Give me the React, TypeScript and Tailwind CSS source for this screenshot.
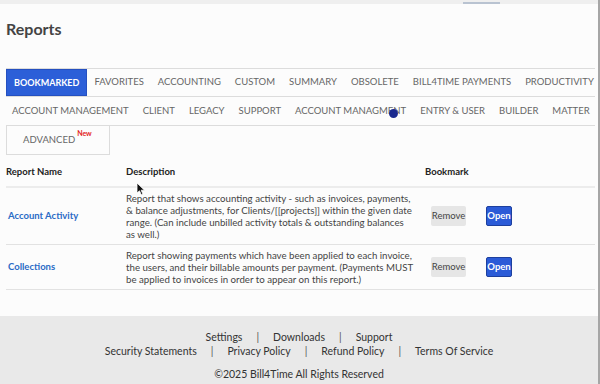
import React from 'react';

const rowOne = ['FAVORITES', 'ACCOUNTING', 'CUSTOM', 'SUMMARY', 'OBSOLETE', 'BILL4TIME PAYMENTS', 'PRODUCTIVITY'];
const rowTwo = ['ACCOUNT MANAGEMENT', 'CLIENT', 'LEGACY', 'SUPPORT', 'ACCOUNT MANAGMENT', 'ENTRY & USER', 'BUILDER', 'MATTER'];

const reports = [
  {
    name: 'Account Activity',
    lines: [
      'Report that shows accounting activity - such as invoices, payments,',
      '& balance adjustments, for Clients/[[projects]] within the given date',
      'range. (Can include unbilled activity totals & outstanding balances',
      'as well.)',
    ],
  },
  {
    name: 'Collections',
    lines: [
      'Report showing payments which have been applied to each invoice,',
      'the users, and their billable amounts per payment. (Payments MUST',
      'be applied to invoices in order to appear on this report.)',
    ],
  },
];

const Sep = () => <span className="mx-[14px] text-[#555]">|</span>;

const App: React.FC = () => {
  return (
    <div className="relative w-[600px] h-[384px] overflow-hidden bg-[#fcfcfc] border-r-2 border-[#a6a6a6] flex flex-col font-['Lato',sans-serif]">
      {/* top strip */}
      <div className="h-[4px] bg-[#efefef] flex">
        <div className="ml-[463px] mt-[2px] w-[37px] h-[2px] bg-[#b9c3d1]" />
      </div>

      <div className="flex-1 pl-[6px] pr-[3px]">
        {/* Title */}
        <h1 className="mt-[15px] text-[16px] leading-[20px] font-bold text-[#444]">Reports</h1>

        {/* Tabs */}
        <div className="mt-[29px]">
          <div className="flex h-[29px] border-t border-b border-[#dcdcdc] items-center whitespace-nowrap">
            <div className="h-full shrink-0 flex items-center px-[7px] bg-[#2c5fd8] border border-[#2550c0] text-white text-[9px] font-bold">
              BOOKMARKED
            </div>
            {rowOne.map((t) => (
              <span key={t} className="shrink-0 px-[7px] text-[9.5px] text-[#666]">{t}</span>
            ))}
          </div>
          <div className="flex h-[29px] border-b border-[#dcdcdc] items-center whitespace-nowrap">
            {rowTwo.map((t) => (
              <span key={t} className="shrink-0 px-[7px] text-[9.5px] text-[#666] first:pl-[6px]">{t}</span>
            ))}
          </div>
          <div className="w-[104px] h-[29px] border-l border-r border-b border-[#dcdcdc] flex items-center pl-[16px]">
            <span className="text-[9.5px] text-[#666]">ADVANCED</span>
            <sup className="text-[7px] font-bold text-[#e21b1b] -mt-[8px] ml-[2px]">New</sup>
          </div>
        </div>

        {/* Table */}
        <div className="mt-[6px]">
          <div className="flex h-[27px] pb-[3px] items-center border-b-2 border-[#ececec] text-[9.5px] font-bold text-[#222]">
            <div className="w-[120px]">Report Name</div>
            <div className="w-[299px]">Description</div>
            <div>Bookmark</div>
          </div>
          {reports.map((r) => (
            <div key={r.name} className="flex items-center border-b border-[#e2e2e2] pt-[4px] pb-[4px]">
              <div className="w-[120px] pl-[2px] text-[9.5px] font-bold text-[#2a6bc6]">{r.name}</div>
              <div className="w-[299px] text-[9.7px] leading-[12px] text-[#444]">
                {r.lines.map((l) => (
                  <div key={l} className="whitespace-nowrap">{l}</div>
                ))}
              </div>
              <div className="flex items-center gap-[20px] pl-[6px]">
                <button className="h-[20px] w-[35px] rounded-[2px] bg-[#e6e6e6] text-[9.5px] text-[#444]">Remove</button>
                <button className="h-[20px] w-[26px] rounded-[2px] bg-[#2b5bd7] border border-[#1d3f9e] text-[9.5px] font-bold text-white">Open</button>
              </div>
            </div>
          ))}
        </div>
      </div>

      {/* Footer */}
      <footer className="h-[68px] bg-[#e9e9e9] flex flex-col items-center text-[10.5px] text-[#333]">
        <div className="mt-[14px] leading-[14px] flex">
          <span>Settings</span><Sep /><span>Downloads</span><Sep /><span>Support</span>
        </div>
        <div className="leading-[14px] flex">
          <span>Security Statements</span><Sep /><span>Privacy Policy</span><Sep /><span>Refund Policy</span><Sep /><span>Terms Of Service</span>
        </div>
        <div className="mt-[9px] leading-[14px]">©2025 Bill4Time All Rights Reserved</div>
      </footer>

      {/* recorded pointer and click marker */}
      <div className="absolute left-[389px] top-[109px] w-[9px] h-[9px] rounded-full bg-[#1b2a8f]" />
      <svg className="absolute left-[136px] top-[182px]" width="10" height="14" viewBox="0 0 10 14">
        <path d="M1 1 L1 11 L3.5 8.8 L5.3 12.8 L6.9 12.1 L5.2 8.2 L8.5 8.2 Z" fill="#111" stroke="#fff" strokeWidth="0.8" />
      </svg>
    </div>
  );
};

export default App;
